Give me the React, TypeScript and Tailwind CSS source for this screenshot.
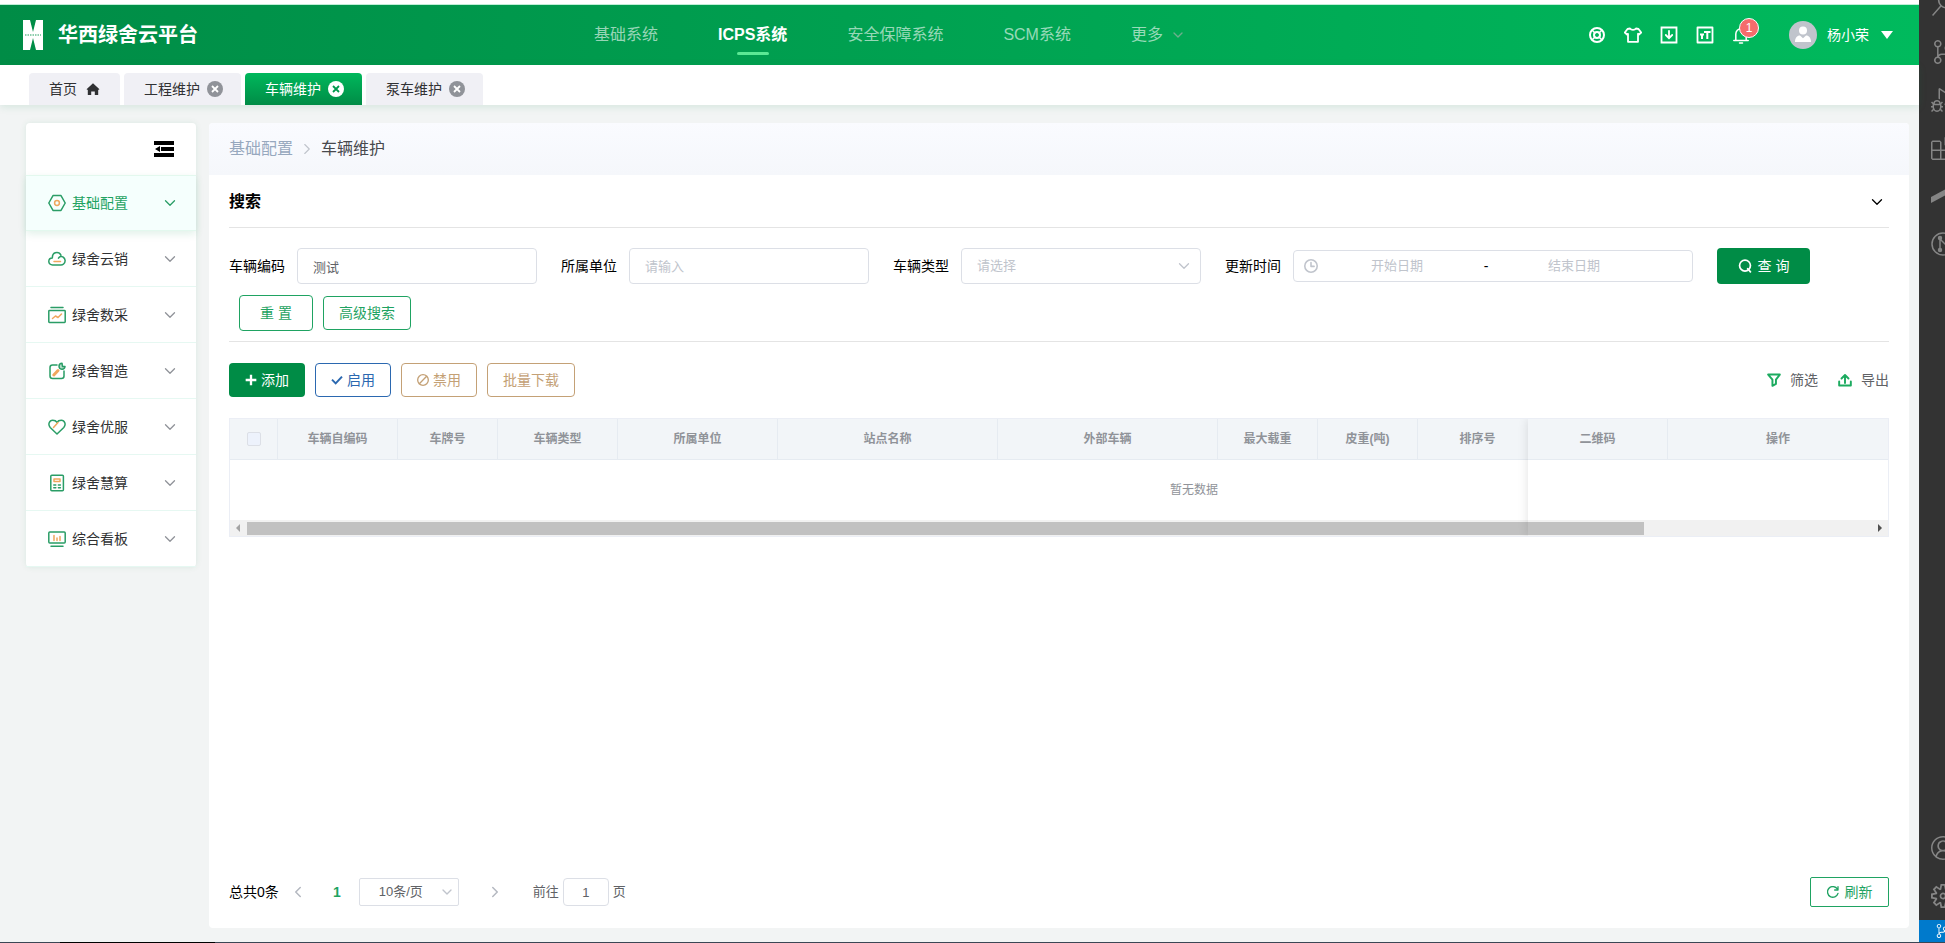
import type { ReactNode } from 'react';
import { ChevronDown, ChevronLeft, ChevronRight } from 'lucide-react';
import {
  VscAccount,
  VscDebugAlt,
  VscExtensions,
  VscSearch,
  VscSettingsGear,
  VscSourceControl
} from 'react-icons/vsc';

const navItems = ['基础系统', 'ICPS系统', '安全保障系统', 'SCM系统'];

const tabs = ['工程维护', '车辆维护', '泵车维护'];

const columns = [
  { title: '车辆自编码', width: 'w-[120px]' },
  { title: '车牌号', width: 'w-[100px]' },
  { title: '车辆类型', width: 'w-[120px]' },
  { title: '所属单位', width: 'w-[160px]' },
  { title: '站点名称', width: 'w-[220px]' },
  { title: '外部车辆', width: 'w-[220px]' },
  { title: '最大载重', width: 'w-[100px]' },
  { title: '皮重(吨)', width: 'w-[100px]' },
  { title: '排序号', width: 'w-[120px]' }
];

type IconProps = { children: ReactNode; className?: string };

const Icon = ({ children, className = 'size-[18px]' }: IconProps) => (
  <svg
    viewBox="0 0 18 18"
    className={`shrink-0 ${className}`}
    fill="none"
    stroke="currentColor"
    strokeWidth="1.5"
    strokeLinecap="round"
    strokeLinejoin="round"
    aria-hidden="true"
  >
    {children}
  </svg>
);

const orange = '#f0a75e';

const menu = [
  {
    title: '基础配置',
    icon: (
      <Icon>
        <path d="M5 1.6h8L17.2 9 13 16.4H5L.8 9z" />
        <circle cx="9" cy="9" r="2.4" stroke={orange} />
      </Icon>
    )
  },
  {
    title: '绿舍云销',
    icon: (
      <Icon>
        <path d="M10.5 8.2c1-1.8 3-2.2 4.5-1.2 2.6 1.6 2.8 5 .6 7-.8.7-1.6 1-2.6 1H4.5C2.500 15 .8 13.6.8 11.5S2.4 8 4.3 8C4.3 4.5 6.3 2.5 9 2.5c1.8 0 3.2 1 3.9 2.6" />
        <path d="M6 11.5h6.5" stroke={orange} />
      </Icon>
    )
  },
  {
    title: '绿舍数采',
    icon: (
      <Icon>
        <path d="M3 1.500h12M1.500 4.500h15c.4 0 .7.3.7.7v10.600c0 .4-.3.700-.7.700h-15a.7.700 0 0 1-.7-.7V5.200c0-.4.300-.7.700-.7z" />
        <path d="M4.500 12.500l3-2.500 2.500 1.500 3.500-3.500" stroke={orange} />
      </Icon>
    )
  },
  {
    title: '绿舍智造',
    icon: (
      <Icon>
        <path d="M9 3H4.500C3 3 2 4 2 5.500V14c0 1.500 1 2.500 2.500 2.500h9c1.500 0 2.500-1 2.500-2.500V9" />
        <path d="M5.800 13l4.200-4.500" stroke={orange} strokeWidth="3" />
        <path d="M14 1.200a3 3 0 1 0 3 3.300h-2.500z" fill="currentColor" fillOpacity=".35" />
      </Icon>
    )
  },
  {
    title: '绿舍优服',
    icon: (
      <Icon>
        <path d="M9 16L2.200 9.500C-.4 6.500 1.300 2.200 4.700 2.200 6.700 2.200 8.200 3 9 4.300 9.800 3 11.300 2.200 13.300 2.200c3.400 0 5.100 4.300 2.500 7.300z" />
        <path d="M5.500 9.500L10 4.500" stroke={orange} />
      </Icon>
    )
  },
  {
    title: '绿舍慧算',
    icon: (
      <Icon>
        <rect x="2.8" y="1.3" width="12.6" height="15.4" rx="1" />
        <path d="M6 5h6v2.500H6z" stroke={orange} />
        <path d="M5.800 11h2M10.400 11h2M5.800 13.800h2M10.400 13.800h2" />
      </Icon>
    )
  },
  {
    title: '综合看板',
    icon: (
      <Icon>
        <rect x=".8" y="2" width="16.4" height="11" rx="1" />
        <path d="M3 16.300h12" />
        <path d="M6 5.500v5M9 8v2.500M12 6.500v4" stroke={orange} />
      </Icon>
    )
  }
];

const Logo = () => (
  <svg viewBox="0 0 20 30" className="h-[30px] w-5" fill="#fff" role="img" aria-label="HUASHI">
    <path d="M0 0h7l3 12 3-12h7v30h-7l-3-12-3 12H0z" />
    <path d="M2 15h16" stroke="#8fceae" strokeWidth="2" strokeDasharray="1.5 1" />
  </svg>
);

const CloseIcon = ({ active }: { active: boolean }) => (
  <svg viewBox="0 0 16 16" className="size-4" aria-hidden="true">
    <circle cx="8" cy="8" r="8" fill={active ? '#fff' : '#909399'} />
    <path d="M5 5l6 6M11 5l-6 6" stroke={active ? '#00994d' : '#fff'} strokeWidth="1.8" />
  </svg>
);

const TopBar = () => (
  <header className="flex h-[60px] shrink-0 items-center bg-linear-to-r from-[#008c46] to-[#00ba5d] text-white">
    <div className="flex w-[594px] items-center gap-[15px] pl-[23px]">
      <Logo />
      <h1 className="text-xl font-bold">华西绿舍云平台</h1>
    </div>
    <nav className="flex h-full items-center gap-[60px] text-base text-white/60">
      {navItems.map((item) => (
        <a
          key={item}
          href="#"
          className={
            item === 'ICPS系统'
              ? 'relative flex h-full items-center font-bold text-white after:absolute after:bottom-2.5 after:left-1/2 after:-ml-4 after:h-[3px] after:w-8 after:rounded-full after:bg-[#5be894]'
              : 'flex h-full items-center'
          }
        >
          {item}
        </a>
      ))}
      <button type="button" className="flex items-center gap-[7px]">
        更多
        <ChevronDown className="size-4 text-[#6fae8d]" />
      </button>
    </nav>
    <div className="ml-auto flex items-center pr-[26px]">
      <div className="flex items-center gap-[18px]">
        <button type="button" aria-label="帮助">
          <Icon>
            <circle cx="9" cy="9" r="7" strokeWidth="2" />
            <circle cx="9" cy="9" r="3" strokeWidth="2" />
            <path d="M4.500 4.500l2.500 2.500M13.500 4.500L11 7M4.500 13.500L7 11M13.500 13.500L11 11" strokeWidth="1.5" />
          </Icon>
        </button>
        <button type="button" aria-label="主题">
          <Icon>
            <path d="M6 2.500c1.200 1.800 4.800 1.800 6 0l2.500.5 2.700 3.500-2.200 2-1-.7v8H4v-8l-1 .7-2.200-2L3.500 3z" strokeWidth="1.8" />
          </Icon>
        </button>
        <button type="button" aria-label="下载">
          <Icon>
            <path d="M1.500 1.500h15v15h-15zM9 4.800v7M5.800 9L9 12.200 12.200 9" strokeLinejoin="miter" strokeWidth="1.8" />
          </Icon>
        </button>
        <button type="button" aria-label="字号">
          <Icon>
            <path d="M1.500 1.500h15v15h-15z" strokeWidth="1.8" />
            <path d="M8 6h6.500M11.300 6v7M4 8.500h4M6 8.500V13" strokeWidth="2" strokeLinecap="butt" />
          </Icon>
        </button>
        <button type="button" aria-label="消息" className="relative">
          <Icon>
            <path d="M1.800 14.500h14.400M3.800 14.500V8a5.200 5.200 0 0 1 10.400 0v6.500M7.500 17h3" />
          </Icon>
          <span className="absolute -top-2 left-[7px] size-5 rounded-full border border-white bg-[#f56c6c] text-center text-xs leading-[18px]">
            1
          </span>
        </button>
      </div>
      <button type="button" className="ml-[39px] flex items-center gap-2.5 text-sm">
        <svg viewBox="0 0 28 28" className="size-7" aria-hidden="true">
          <circle cx="14" cy="14" r="14" fill="#c0c4cc" />
          <circle cx="14" cy="9.500" r="4" fill="#fff" />
          <path d="M6 21c0-4 2-6.500 5-6.500l3 2.800 3-2.800c3 0 5 2.500 5 6.500z" fill="#fff" />
        </svg>
        杨小荣
        <svg viewBox="0 0 12 8" className="ml-0.5 h-2 w-3" fill="#fff" aria-hidden="true">
          <path d="M0 0h12L6 8z" />
        </svg>
      </button>
    </div>
  </header>
);

const TabBar = () => (
  <div className="relative flex h-10 shrink-0 items-end gap-1 bg-white pl-[29px] text-sm text-[#303133] shadow-[0_2px_8px_rgba(0,140,70,0.12)]">
    <button type="button" className="flex h-8 items-center gap-[9px] rounded-t bg-[#f0f0f5] px-5">
      首页
      <svg viewBox="0 0 14 14" className="size-3.5" fill="#303133" aria-hidden="true">
        <path d="M7 1.200L13.200 7v.8h-1V13H8.800V9.500H5.200V13H1.800V7.800h-1V7z" />
      </svg>
    </button>
    {tabs.map((tab) => (
      <button
        key={tab}
        type="button"
        className={
          tab === '车辆维护'
            ? 'flex h-8 items-center gap-[7px] rounded-t bg-linear-to-b from-[#00b85c] to-[#008c46] pr-[18px] pl-5 text-white'
            : 'flex h-8 items-center gap-[7px] rounded-t bg-[#f0f0f5] pr-[18px] pl-5'
        }
      >
        {tab}
        <CloseIcon active={tab === '车辆维护'} />
      </button>
    ))}
  </div>
);

const SideMenu = () => (
  <aside className="w-[170px] shrink-0 self-start rounded bg-white shadow-[0_0_6px_rgba(0,140,70,0.1)]">
    <div className="flex h-[52px] items-center justify-end pr-[22px]">
      <button type="button" aria-label="收起菜单">
        <svg viewBox="0 0 20 16" className="h-4 w-5" aria-hidden="true">
          <path d="M0 0h20v4H0zM7 6h13v4H7zM0 12h20v4H0zM6 5v6L1 8z" />
        </svg>
      </button>
    </div>
    <ul>
      {menu.map((item) => {
        const active = item.title === '基础配置';
        return (
          <li key={item.title}>
            <button
              type="button"
              className={
                active
                  ? 'relative flex h-14 w-full items-center gap-1.5 border-y border-[#e3f8ee] bg-[#f5fffd] pr-[17px] pl-[22px] text-sm text-[#1fa362] shadow-[0_3px_8px_rgba(0,140,70,0.12)]'
                  : 'flex h-14 w-full items-center gap-1.5 border-t border-b border-t-transparent border-b-[#e6f8f2] pr-[17px] pl-[22px] text-sm text-[#303133]'
              }
            >
              <span className="text-[#2a9d66]">{item.icon}</span>
              {item.title}
              <ChevronDown
                strokeWidth={1.75}
                className={active ? 'ml-auto size-[18px] text-[#2a9d66]' : 'ml-auto size-[18px] text-[#909399]'}
              />
            </button>
          </li>
        );
      })}
    </ul>
  </aside>
);

const SearchForm = () => (
  <form className="flex flex-wrap items-center gap-y-[11px] border-b border-[#e4e4e4] pt-5 pb-2.5 text-sm text-black">
    <label htmlFor="code" className="mr-3">车辆编码</label>
    <input
      id="code"
      defaultValue="测试"
      className="mr-6 h-9 w-60 rounded border border-[#dcdfe6] px-[15px] text-[13px] text-[#606266] outline-none"
    />
    <label htmlFor="unit" className="mr-3">所属单位</label>
    <input
      id="unit"
      placeholder="请输入"
      className="mr-6 h-9 w-60 rounded border border-[#dcdfe6] px-[15px] text-[13px] outline-none placeholder:text-[#c0c4cc]"
    />
    <label htmlFor="type" className="mr-3">车辆类型</label>
    <div className="relative mr-6">
      <select
        id="type"
        className="h-9 w-60 appearance-none rounded border border-[#dcdfe6] bg-white px-[15px] text-[13px] text-[#c0c4cc] outline-none"
      >
        <option>请选择</option>
      </select>
      <ChevronDown strokeWidth={1.75} className="pointer-events-none absolute top-[9px] right-2 size-[18px] text-[#c0c4cc]" />
    </div>
    <label htmlFor="start" className="mr-3">更新时间</label>
    <div className="mr-6 flex h-8 w-[400px] items-center rounded border border-[#dcdfe6] pl-2.5 text-[13px]">
      <Icon className="size-3.5 text-[#c0c4cc]">
        <circle cx="9" cy="9" r="8" strokeWidth="2" />
        <path d="M9 4.500V9.500h4" strokeWidth="2" />
      </Icon>
      <input
        id="start"
        placeholder="开始日期"
        className="w-[158px] text-center outline-none placeholder:text-[#c0c4cc]"
      />
      <span className="w-5 text-center text-sm">-</span>
      <input
        aria-label="结束日期"
        placeholder="结束日期"
        className="w-[156px] text-center outline-none placeholder:text-[#c0c4cc]"
      />
    </div>
    <button type="button" className="flex h-9 w-[93px] items-center justify-center gap-1.5 rounded bg-[#008c46] text-white">
      <Icon className="size-3.5">
        <circle cx="9" cy="8.500" r="7" strokeWidth="2.2" />
        <path d="M12.500 12.500l3.500 4" strokeWidth="2.2" />
      </Icon>
      查 询
    </button>
    <button type="reset" className="ml-2.5 h-9 w-[74px] rounded border border-[#1fa362] text-[#1fa362]">
      重 置
    </button>
    <button type="button" className="ml-2.5 h-[34px] w-[88px] rounded-sm border border-[#1fa362] text-[#1fa362]">
      高级搜索
    </button>
  </form>
);

const Toolbar = () => (
  <div className="flex items-center gap-2.5 py-[21px] text-sm">
    <button type="button" className="flex h-[34px] w-[76px] items-center justify-center gap-1 rounded-sm bg-[#008c46] text-white">
      <Icon className="size-3">
        <path d="M9 1v16M1 9h16" strokeWidth="3.5" strokeLinecap="butt" />
      </Icon>
      添加
    </button>
    <button type="button" className="flex h-[34px] w-[76px] items-center justify-center gap-1 rounded-sm border border-[#2b68b0] text-[#2b68b0]">
      <Icon className="size-3">
        <path d="M1.500 8.500l5.500 5.500 9.500-10" strokeWidth="3" strokeLinecap="butt" strokeLinejoin="miter" />
      </Icon>
      启用
    </button>
    <button type="button" className="flex h-[34px] w-[76px] items-center justify-center gap-1 rounded-sm border border-[#c4a176] text-[#c4a176]">
      <Icon className="size-3">
        <circle cx="9" cy="9" r="8" strokeWidth="2" />
        <path d="M3.500 14.500l11-11" strokeWidth="2" />
      </Icon>
      禁用
    </button>
    <button type="button" className="h-[34px] w-[88px] rounded-sm border border-[#c4a176] text-[#c4a176]">
      批量下载
    </button>
    <button type="button" className="ml-auto flex items-center gap-[9px] text-[#606266]">
      <Icon className="size-3.5 text-[#1dab60]">
        <path d="M1.500 2h15L11.500 8.500V14L7 16.500v-8z" strokeWidth="2.5" />
      </Icon>
      筛选
    </button>
    <button type="button" className="ml-2.5 flex items-center gap-[9px] text-[#606266]">
      <Icon className="size-3.5 text-[#1dab60]">
        <path d="M1.500 11v5h15v-5M9 13V3M4.500 7L9 2.500 13.500 7" strokeWidth="2.5" />
      </Icon>
      导出
    </button>
  </div>
);

const VehicleTable = () => (
  <div className="relative overflow-hidden border border-[#ebeef5]">
    <div className="overflow-hidden">
      <table className="w-[1928px] table-fixed border-separate border-spacing-0 text-xs text-[#909399]">
        <thead>
          <tr className="h-[41px]">
            <th className="w-12 border-r border-b border-[#e6ebf1] bg-[#f2f5f8] align-middle">
              <input
                type="checkbox"
                aria-label="全选"
                className="mx-auto block size-3.5 appearance-none rounded-xs border border-[#dcdfe6] bg-[#edf2fc]"
              />
            </th>
            {columns.map((column) => (
              <th key={column.title} className={`${column.width} border-r border-b border-[#e6ebf1] bg-[#f2f5f8]`}>
                {column.title}
              </th>
            ))}
            <td className="w-[260px] border-b border-[#e6ebf1] bg-[#f2f5f8]" />
            <th className="sticky right-[220px] w-[140px] border-r border-b border-[#e6ebf1] bg-[#f2f5f8]">二维码</th>
            <th className="sticky right-0 w-[220px] border-b border-[#e6ebf1] bg-[#f2f5f8]">操作</th>
          </tr>
        </thead>
        <tbody>
          <tr className="h-[60px]">
            <td colSpan={13} className="text-center">暂无数据</td>
          </tr>
        </tbody>
      </table>
    </div>
    <div className="flex h-4 items-center bg-[#f1f1f1] px-1.5">
      <svg viewBox="0 0 4 8" className="h-2 w-1" fill="#a3a3a3" aria-hidden="true">
        <path d="M4 0v8L0 4z" />
      </svg>
      <div className="mx-[7px] flex-1">
        <div className="h-[13px] w-[86%] bg-[#c1c1c1]" />
      </div>
      <svg viewBox="0 0 4 8" className="h-2 w-1" fill="#505050" aria-hidden="true">
        <path d="M0 0v8l4-4z" />
      </svg>
    </div>
    {/* shadow cast by the fixed columns */}
    <div className="pointer-events-none absolute inset-y-0 right-0 w-[360px] shadow-[0_0_10px_rgba(0,0,0,0.12)]" />
  </div>
);

const Pagination = () => (
  <div className="mt-auto flex items-center pb-[21px] text-[13px] text-[#606266]">
    <span className="text-sm text-black">总共0条</span>
    <button type="button" aria-label="上一页" className="ml-2.5 text-[#b4b8c0]">
      <ChevronLeft className="size-[18px]" />
    </button>
    <button type="button" className="w-[60px] text-center text-sm font-bold text-[#1fa362]">1</button>
    <div className="relative -ml-2">
      <select
        aria-label="每页条数"
        className="h-7 w-[100px] appearance-none rounded-xs border border-[#dcdfe6] bg-white pr-6 pl-[19px] outline-none"
      >
        <option>10条/页</option>
      </select>
      <ChevronDown className="pointer-events-none absolute top-1.5 right-1 size-4 text-[#c0c4cc]" />
    </div>
    <button type="button" aria-label="下一页" className="ml-[27px] text-[#b4b8c0]">
      <ChevronRight className="size-[18px]" />
    </button>
    <label htmlFor="page" className="ml-[29px]">前往</label>
    <input
      id="page"
      defaultValue="1"
      className="mx-1 h-7 w-[46px] rounded border border-[#dcdfe6] text-center outline-none"
    />
    页
    <button
      type="button"
      className="ml-auto flex h-[30px] w-[79px] items-center justify-center gap-1.5 rounded-xs border border-[#1fa362] text-sm text-[#1fa362]"
    >
      <Icon className="size-3">
        <path d="M15.500 4.500A8 8 0 1 0 16.500 11M16.500 1v5h-5" strokeWidth="2" />
      </Icon>
      刷新
    </button>
  </div>
);

const EditorStrip = () => (
  <div className="flex w-[26px] shrink-0 flex-col overflow-hidden bg-[#333] text-[#858585]" aria-hidden="true">
    <div className="-mt-5 flex flex-col pt-3 *:mb-6 *:ml-3 *:size-6 *:shrink-0">
      <VscSearch />
      <VscSourceControl />
      <VscDebugAlt />
      <VscExtensions />
      <svg viewBox="0 0 24 24" fill="currentColor">
        <path d="M0 13L24 0v6L0 19z" />
      </svg>
      <svg viewBox="0 0 24 24" fill="none" stroke="currentColor" strokeWidth="1.5">
        <circle cx="12" cy="12" r="11" />
        <path d="M9 6v12M9 7l6 6" />
        <circle cx="9" cy="6" r="1.5" fill="currentColor" />
        <circle cx="9" cy="18" r="1.5" fill="currentColor" />
      </svg>
    </div>
    <div className="mt-auto flex flex-col gap-6 pb-3 *:ml-3 *:size-6 *:shrink-0">
      <VscAccount />
      <VscSettingsGear />
    </div>
    <div className="flex h-[22px] shrink-0 items-center bg-[#007acc] pl-4 text-white">
      <VscSourceControl className="size-3.5 shrink-0" />
    </div>
  </div>
);

export default function App() {
  return (
    <div className="flex h-screen flex-col bg-[#f2f4f4] font-['Liberation_Sans','Noto_Sans_CJK_SC',sans-serif]">
      <div className="flex min-h-0 flex-1">
        <div className="flex min-w-0 flex-1 flex-col">
          <div className="h-[5px] shrink-0 border-b border-[#bfeed6] bg-white" />
          <TopBar />
          <TabBar />
          <div className="flex min-h-0 flex-1 gap-[13px] pt-[18px] pr-2.5 pb-3.5 pl-[26px]">
            <SideMenu />
            <main className="flex min-w-0 flex-1 flex-col overflow-hidden rounded bg-white">
              <div className="flex h-[52px] shrink-0 items-center gap-[5px] bg-linear-to-b from-[#fafbff] to-[#f5f7fb] px-5 text-base">
                <a href="#" className="text-[#97a8be]">基础配置</a>
                <ChevronRight className="size-[18px] text-[#c0c4cc]" strokeWidth={1.5} />
                <span className="text-[#48494d]">车辆维护</span>
              </div>
              <div className="flex flex-1 flex-col px-5">
                <div className="flex h-[53px] shrink-0 items-center justify-between border-b border-[#e4e4e4] pt-0.5 pr-[3px]">
                  <h2 className="text-base font-bold text-black">搜索</h2>
                  <button type="button" aria-label="展开">
                    <ChevronDown className="size-[18px] text-black" strokeWidth={1.75} />
                  </button>
                </div>
                <SearchForm />
                <Toolbar />
                <VehicleTable />
                <Pagination />
              </div>
            </main>
          </div>
        </div>
        <EditorStrip />
      </div>
      <div className="flex h-px shrink-0 bg-[#3b4654]">
        <div className="ml-[60px] w-[155px] bg-black" />
      </div>
    </div>
  );
}
